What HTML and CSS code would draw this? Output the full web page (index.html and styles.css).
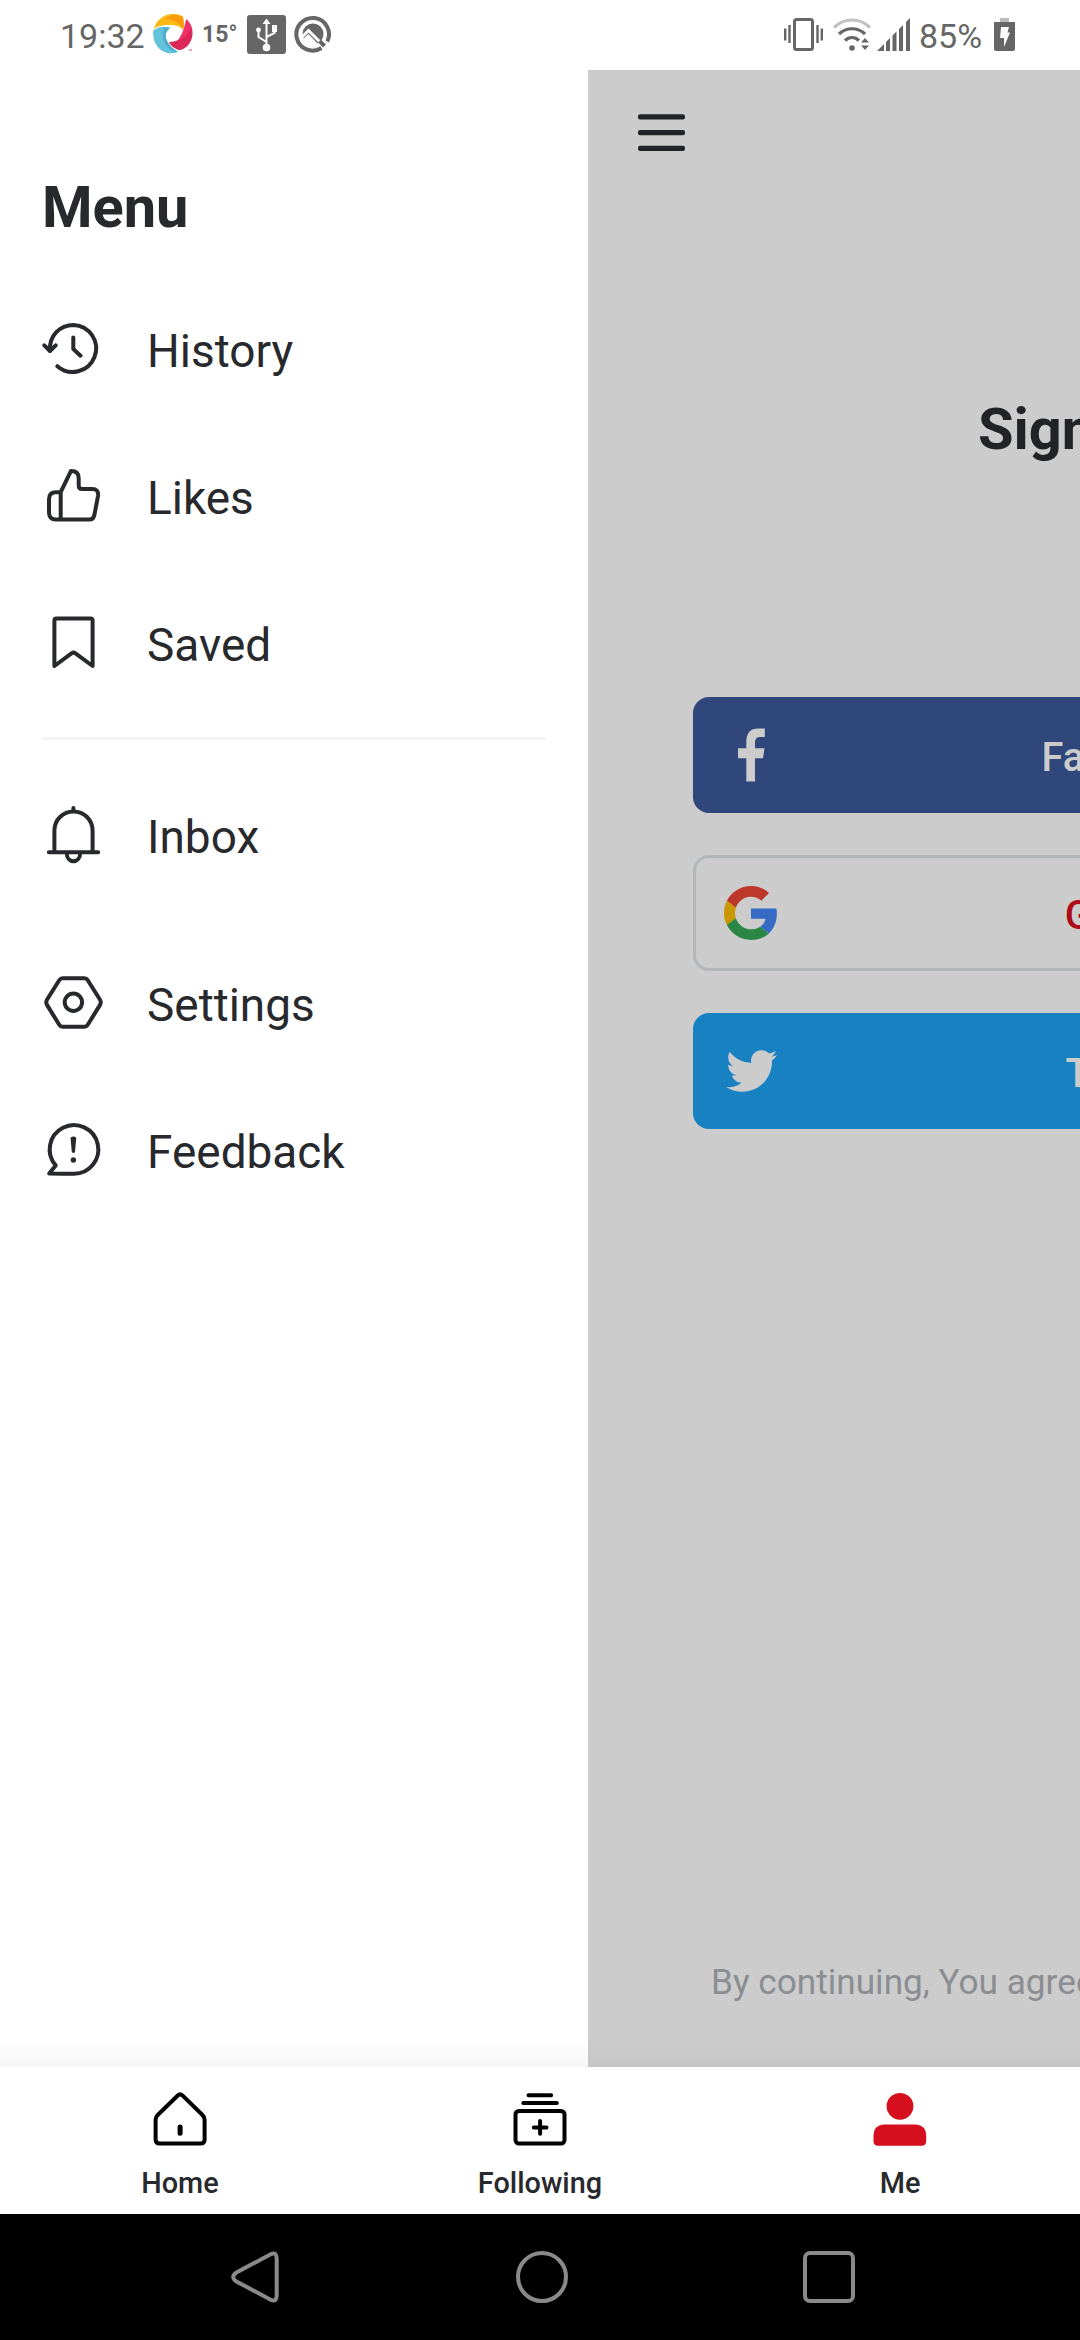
FILE: index.html
```html
<!DOCTYPE html>
<html lang="en">
<head>
<meta charset="utf-8">
<title>Menu</title>
<link rel="stylesheet" href="styles.css">
</head>
<body>
<header class="status">
  <div class="status-group status-left">
    <span class="clock">19:32</span>
    <svg class="pinwheel" width="40" height="40" viewBox="0 0 40 40">
      <path d="M1 15C3 6 11 0 20 0c5 0 8 1 10 3 1 5 1 9 0 13C26 11 21 11 16 11 9 11 5 12 1 15z" fill="#fdb913"/>
      <path d="M12 5C16 1 24-1 30 3c1 5 1 9 0 13-3-8-9-10-18-11z" fill="#f99d0c"/>
      <path d="M33 5c5 4 7 9 6.500 16C38 29 33 35 27 36c-5-1-9-4-11-8 6 1 9-1 11-5 3-5 5-11 6-18z" fill="#ee3368"/>
      <path d="M38 14c3 10-1 19-11 22-5-1-9-4-11-8 10 0 18-5 22-14z" fill="#dc2858"/>
      <path d="M0 17c3-3 8-5 13-4 2 0 3 0 4 1-5 4-5 8-3 13 2 4 6 8 11 11C18 41 9 39 4 32 1 28 0 23 0 17z" fill="#63c3dc"/>
      <path d="M11 14c2-1 4-1 6 0-5 4-5 8-3 13 2 4 6 8 11 11C14 37 7 26 11 14z" fill="#4fadcb"/>
      <path d="M36 36h3" stroke="#ee8ba6" stroke-width="1.500"/>
    </svg>
    <span class="temp">15°</span>
    <svg class="usb" width="39" height="39" viewBox="0 0 39 39">
      <rect width="39" height="39" rx="3" fill="#666"/>
      <g fill="none" stroke="#fff" stroke-width="2">
        <path d="M19.500 8v24M19.500 27l-8-5v-7M19.500 22l8-4v-6"/>
      </g>
      <path d="M19.500 3.500l4 5.500h-8zM25 10h5v7h-5z" fill="#fff"/>
      <circle cx="11.500" cy="15" r="2.400" fill="#fff"/><circle cx="19.500" cy="32.500" r="3.800" fill="#fff"/>
    </svg>
    <svg class="quick" width="38" height="38" viewBox="0 0 38 38">
      <path d="M27.500 33A16.300 16.300 0 1 1 33.300 26.500" fill="none" stroke="#666" stroke-width="4"/>
      <circle cx="19" cy="19" r="10.500" fill="#666"/>
      <path d="M8 22l6.500-6.500L29 30" fill="none" stroke="#fff" stroke-width="3"/>
      <path d="M9 24l5.500-5L24 29q-9 4-15-5z" fill="#fff"/>
      <path d="M25.500 26l5 5" stroke="#666" stroke-width="4"/>
    </svg>
  </div>
  <div class="status-group status-right">
    <svg class="vibrate" width="39" height="33" viewBox="0 0 39 33">
      <rect x="10.500" y="1.500" width="18" height="30" rx="2" fill="none" stroke="#666" stroke-width="3"/>
      <path d="M1.200 10.500v12M5.500 7v18M33.500 7v18M37.800 10.500v12" stroke="#666" stroke-width="2.400"/>
    </svg>
    <svg class="wifi" width="38" height="33" viewBox="0 0 38 33">
      <g fill="none" stroke-width="3.200">
        <path d="M1 9.500C11-.5 27-.5 37 9.500" stroke="#c2c2c2"/>
        <path d="M6 16C13 9 25 9 32 16" stroke="#666"/>
        <path d="M12 22.500C16 18.500 22 18.500 26 22.500" stroke="#666"/>
      </g>
      <circle cx="19" cy="30" r="2.800" fill="#666"/>
      <path d="M28 24.500l4-4.500 4 4.500zM28 27.500l4 4.500 4-4.500z" fill="#666"/>
    </svg>
    <svg class="signal" width="33" height="33" viewBox="0 0 33 33" fill="#666">
      <path d="M0 33l7-7v7zM9 24l4-4v13H9zM15.500 17.500l4-4V33h-4zM22 11l4-4v26h-4zM29 4l4-4v33h-4z"/>
    </svg>
    <span class="percent">85%</span>
    <svg class="battery" width="21" height="33" viewBox="0 0 21 33">
      <rect x="6" width="9" height="4" fill="#bbb"/>
      <path d="M0 4h21v27q0 2-2 2H2q-2 0-2-2z" fill="#666"/>
      <path d="M7 9h8l-1.500 5.500H16L10 29v-9H6z" fill="#fff"/>
    </svg>
  </div>
</header>

<main class="stage">
  <nav class="drawer">
    <h1 class="drawer-title">Menu</h1>
    <a class="row">
      <svg class="icon" viewBox="0 0 63 63"><path d="M8 33.500C7 18.500 18 7.900 31.500 7.900a23.500 23.500 0 1 1-16.200 41.300"/><path d="M2.300 28.300L8 34l5.700-5.700M31.300 20.500V32l7.200 6.700"/></svg>
      <span>History</span>
    </a>
    <a class="row">
      <svg class="icon" viewBox="0 0 63 63"><path d="M18.700 28.200L29 6.900q7.700 0 7.700 7V21.500q0 3.500 3.500 3.500H50q7 0 6 7l-3.600 19q-1 4.600-5 4.600H14q-7 0-7-7V35.200q0-7 7-7h4.700zV55.600"/></svg>
      <span>Likes</span>
    </a>
    <a class="row">
      <svg class="icon" viewBox="0 0 63 63"><path d="M12.400 55V9.500q0-2 2-2h34.200q2 0 2 2V55L33.500 42.300q-2-1.400-4 0z"/></svg>
      <span>Saved</span>
    </a>
    <div class="divider"></div>
    <a class="row row-inbox">
      <svg class="icon" viewBox="0 0 63 63"><path d="M6.800 49.300h49.400M12.400 49V27.500a19.100 19.100 0 0 1 38.200 0V49M31.400 5v3M24.700 50c0 11 13.500 11 13.500 0"/></svg>
      <span>Inbox</span>
    </a>
    <a class="row">
      <svg class="icon" viewBox="0 0 63 63"><path d="M20.500 7.300h22q2 0 3.100 1.700l12.300 19.500q1.700 2.800 0 5.600L45.600 54q-1.100 1.700-3.100 1.700h-22q-2 0-3.100-1.700L5.100 34.100q-1.700-2.800 0-5.600L17.400 9q1.100-1.700 3.100-1.700z"/><circle cx="31.400" cy="31.300" r="8.700"/></svg>
      <span>Settings</span>
    </a>
    <a class="row">
      <svg class="icon" viewBox="0 0 63 63"><path d="M31.500 55.700a24.300 24.300 0 1 0-17.800-8.300L7.200 55.500q12 .2 24.300.2z"/><path class="solid" d="M28.600 20.500q0-2 2.800-2t2.800 2l-1.200 13.500q-1.600 2-3.200 0z"/><circle class="solid" cx="31.400" cy="42" r="2.700"/></svg>
      <span>Feedback</span>
    </a>
  </nav>

  <section class="page">
    <svg class="hamburger" width="47" height="38" viewBox="0 0 47 38"><rect y=".2" width="47" height="5.300" rx="2"/><rect y="16" width="47" height="5.300" rx="2"/><rect y="31.700" width="47" height="5.300" rx="2"/></svg>
    <h2 class="page-title">Sign</h2>
    <div class="providers">
      <a class="provider facebook">
        <svg class="brand" viewBox="0 0 54 54"><path d="M22.300 53.500V30.300H14v-10h8.300v-6.500Q22.300.5 34.500.5h6.300v8.600h-4.500q-5.300 0-5.300 5.200v6h9.500L39 30.300h-8v23.200z" fill="#ccc"/></svg>
        <span>Facebook</span>
      </a>
      <a class="provider google">
        <svg class="brand" viewBox="0 0 48 48">
          <path fill="#bd372b" d="M24 9.500c3.540 0 6.710 1.220 9.210 3.600l6.850-6.850C35.900 2.380 30.470 0 24 0 14.620 0 6.510 5.380 2.560 13.220l7.980 6.190C12.430 13.720 17.740 9.500 24 9.500z"/>
          <path fill="#356bc5" d="M46.980 24.550c0-1.570-.15-3.090-.38-4.550H24v9.020h12.940c-.58 2.960-2.260 5.480-4.780 7.180l7.730 6c4.510-4.180 7.090-10.360 7.090-17.650z"/>
          <path fill="#c99704" d="M10.530 28.590c-.48-1.450-.76-2.990-.76-4.590s.27-3.140.76-4.590l-7.980-6.190C.92 16.460 0 20.120 0 24c0 3.880.92 7.540 2.560 10.780l7.970-6.190z"/>
          <path fill="#2a8643" d="M24 48c6.480 0 11.930-2.130 15.890-5.810l-7.730-6c-2.150 1.450-4.920 2.300-8.160 2.300-6.260 0-11.570-4.220-13.470-9.910l-7.980 6.190C6.510 42.620 14.620 48 24 48z"/>
        </svg>
        <span>Google</span>
      </a>
      <a class="provider twitter">
        <svg class="brand" viewBox="0 0 24 24"><path fill="#ccc" d="M23.643 4.937c-.835.37-1.732.62-2.675.733.962-.576 1.700-1.490 2.048-2.578-.9.534-1.897.922-2.958 1.130-.85-.904-2.060-1.470-3.400-1.470-2.572 0-4.658 2.086-4.658 4.660 0 .364.042.718.120 1.060-3.873-.195-7.304-2.050-9.602-4.868-.4.690-.63 1.490-.63 2.342 0 1.616.823 3.043 2.072 3.878-.764-.025-1.482-.234-2.110-.583v.060c0 2.257 1.605 4.140 3.737 4.568-.392.106-.803.162-1.227.162-.3 0-.593-.028-.877-.082.593 1.850 2.313 3.198 4.352 3.234-1.595 1.250-3.604 1.995-5.786 1.995-.376 0-.747-.022-1.112-.065 2.062 1.323 4.510 2.093 7.140 2.093 8.570 0 13.255-7.098 13.255-13.254 0-.2-.005-.402-.014-.602.910-.658 1.700-1.477 2.323-2.410z"/></svg>
        <span>Twitter</span>
      </a>
    </div>
    <p class="terms">By continuing, You agree</p>
  </section>
  <div class="stage-shadow"></div>
</main>

<nav class="tabs">
  <a class="tab">
    <svg class="tab-icon" viewBox="0 0 63 63"><path d="M28.500 7.700q2.600-2.600 5.200 0L53.500 27q2.100 2 2.100 4.700V51.500q0 4-4 4h-41q-4 0-4-4V31.700q0-2.700 2.100-4.700z"/><path class="door" d="M31.100 39v6.300"/></svg>
    <span>Home</span>
  </a>
  <a class="tab">
    <svg class="tab-icon" viewBox="0 0 63 63"><rect x="6.500" y="23" width="49" height="32.600" rx="3.500"/><path d="M19.500 7.200h22.700M14.300 15h33.500M24.800 39.400h12.700M31.100 33.100v12.600"/></svg>
    <span>Following</span>
  </a>
  <a class="tab">
    <svg class="tab-icon tab-icon-active" viewBox="0 0 63 63"><circle cx="31" cy="18.300" r="13.400"/><path d="M14.600 36.500H47q10.200 1 10.200 11V53q0 4.700-4.500 4.700H9Q4.500 57.700 4.500 53v-5.500q0-10 10.100-11z"/></svg>
    <span>Me</span>
  </a>
</nav>

<footer class="sysnav">
  <svg width="52" height="52" viewBox="0 0 52 52"><path d="M42.500 2.800Q47.700 1 47.700 8v36q0 7-5.200 5.200L7 30.200q-5.600-4.200 0-8.400z"/></svg>
  <svg width="52" height="52" viewBox="0 0 52 52"><circle cx="26" cy="26" r="24"/></svg>
  <svg width="52" height="52" viewBox="0 0 52 52"><rect x="2" y="2" width="48" height="48" rx="5"/></svg>
</footer>
</body>
</html>
```
FILE: styles.css
```css
* {
  box-sizing: border-box;
}

body {
  margin: 0;
  width: 1080px;
  height: 2340px;
  display: flex;
  flex-direction: column;
  overflow: hidden;
  background: #fff;
  color: #28292d;
  font-family: Roboto, "Liberation Sans", sans-serif;
}

svg {
  display: block;
  flex: none;
}

/* Status bar */
.status {
  height: 70px;
  display: flex;
  justify-content: space-between;
  padding: 0 65px 0 60px;
  color: #666;
  white-space: nowrap;
}

.status-group {
  display: flex;
  align-items: flex-start;
}

.clock,
.percent {
  font-size: 34px;
  line-height: 40px;
  margin-top: 16px;
}

.clock {
  width: 93px;
}

.pinwheel {
  margin-top: 14px;
}

.temp {
  width: 54px;
  padding-left: 9px;
  margin-top: 21px;
  font-size: 23px;
  line-height: 28px;
  font-weight: 700;
}

.usb {
  margin-top: 15px;
}

.quick {
  margin: 15px 0 0 8px;
}

.vibrate,
.wifi,
.signal,
.battery {
  margin-top: 18px;
}

.wifi {
  margin-left: 10px;
}

.signal {
  margin-left: 6px;
}

.percent {
  width: 75px;
  margin-left: 9px;
}

/* Drawer and page behind it */
.stage {
  position: relative;
  height: 1997px;
  display: flex;
}

.stage-shadow {
  position: absolute;
  left: 0;
  right: 0;
  bottom: 0;
  height: 30px;
  background: linear-gradient(rgba(0, 0, 0, 0), rgba(0, 0, 0, .035));
}

.drawer {
  width: 588px;
  padding: 103px 42px 0;
}

.drawer-title {
  margin: 0 0 36px;
  font-size: 57.75px;
  line-height: 68px;
  font-weight: 700;
}

.row {
  height: 147px;
  display: flex;
  align-items: center;
  gap: 42px;
  font-size: 45.94px;
  line-height: 64px;
}

.row span {
  padding-top: 1px;
}

.row-inbox {
  margin-bottom: 21px;
}

.icon {
  width: 63px;
  height: 63px;
  margin-bottom: 4px;
  fill: none;
  stroke: #28292d;
  stroke-width: 4;
  stroke-linecap: round;
  stroke-linejoin: round;
}

.solid {
  fill: #28292d;
  stroke: none;
}

.divider {
  height: 3px;
  margin: 19px 0 23px;
  background: #f3f3f8;
}

.page {
  width: 492px;
  overflow: hidden;
  background: #ccc;
  color: #222326;
  white-space: nowrap;
}

.hamburger {
  margin: 44px 0 0 50px;
  fill: #222326;
}

.page-title {
  margin: 243px 0 0 390px;
  font-size: 57.75px;
  line-height: 68px;
  font-weight: 700;
}

.providers {
  width: 1080px;
  margin-top: 234px;
  padding: 0 105px;
  display: flex;
  flex-direction: column;
  gap: 42px;
}

.provider {
  height: 116px;
  display: grid;
  grid-template-columns: 54px 1fr 54px;
  align-items: center;
  padding: 0 31px;
  border-radius: 16px;
  color: #ccc;
  font-size: 39.8px;
  font-weight: 500;
  line-height: 46px;
  text-align: center;
}

.provider span {
  padding-top: 5px;
}

.brand {
  width: 54px;
  height: 54px;
}

.facebook {
  background: #2f477a;
}

.google {
  padding: 0 28px;
  border: 3px solid #b2b6b9;
  color: #ac0c18;
}

.twitter {
  background: #1881c2;
}

.terms {
  margin: 833px 0 0 123px;
  color: #8a8d92;
  font-size: 35.2px;
  line-height: 40px;
}

/* Bottom tabs */
.tabs {
  height: 147px;
  display: grid;
  grid-template-columns: repeat(3, 1fr);
}

.tab {
  padding-top: 21px;
  display: flex;
  flex-direction: column;
  align-items: center;
  gap: 15px;
  font-size: 28.875px;
  line-height: 34px;
  font-weight: 500;
}

.tab-icon {
  width: 63px;
  height: 63px;
  fill: none;
  stroke: #000;
  stroke-width: 4;
  stroke-linecap: round;
  stroke-linejoin: round;
}

.door {
  stroke-width: 5;
}

.tab-icon-active {
  fill: #d50f1d;
  stroke: none;
}

/* System navigation */
.sysnav {
  height: 126px;
  display: flex;
  align-items: center;
  justify-content: space-between;
  padding: 0 225px 0 229px;
  background: #000;
}

.sysnav svg {
  fill: none;
  stroke: #8a8a8a;
  stroke-width: 4;
}
```
